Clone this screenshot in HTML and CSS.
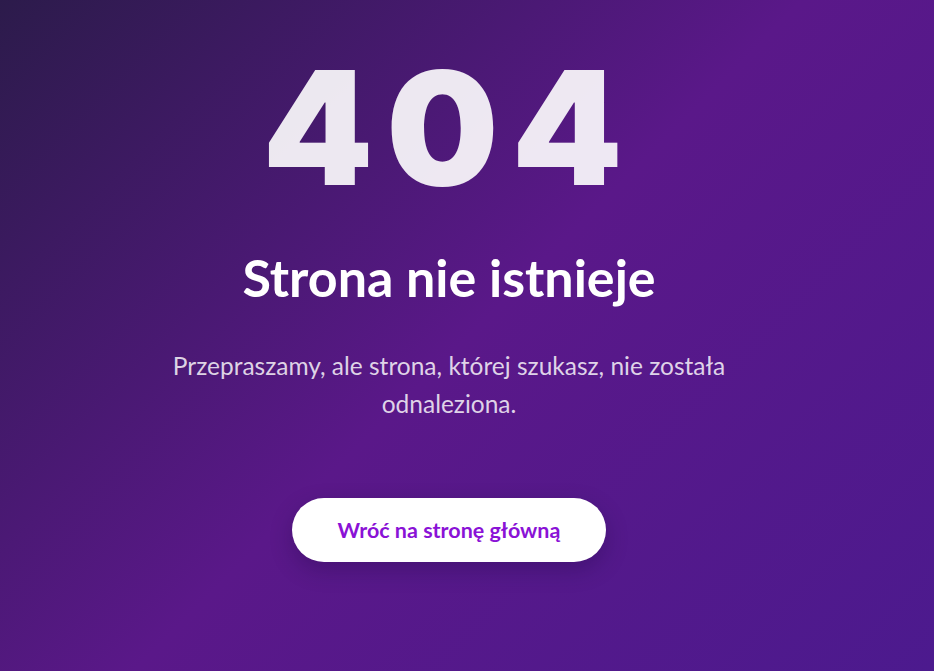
FILE: index.html
```html
<!DOCTYPE html>
<html lang="pl">
<head>
<meta charset="utf-8">
<title>404 - Strona nie istnieje</title>
<link rel="stylesheet" href="styles.css">
</head>
<body>
<main class="page">
  <div class="content">
    <h1 class="code">404</h1>
    <h2 class="title">Strona nie istnieje</h2>
    <p class="message">Przepraszamy, ale strona, której szukasz, nie została odnaleziona.</p>
    <a class="home-btn" href="#">Wróć na stronę główną</a>
  </div>
</main>
</body>
</html>
```
FILE: styles.css
```css
* { box-sizing: border-box; }
html, body { margin: 0; padding: 0; height: 100%; }
body {
  font-family: "Lato", "Open Sans", sans-serif;
  background: linear-gradient(135deg, #2c1b4b 0%, #5a1889 50%, #4c1a8e 100%);
  color: #fff;
}
.page {
  min-height: 100vh;
  display: flex;
  justify-content: center;
  align-items: flex-start;
  padding: 30px 36px 0 0;
}
.content {
  display: flex;
  flex-direction: column;
  align-items: center;
  text-align: center;
  width: 600px;
}
.code {
  margin: 11px 0 0;
  font-family: "Inter", sans-serif;
  font-weight: 900;
  font-size: 158px;
  line-height: 1.1;
  letter-spacing: 13px;
  color: rgba(255, 255, 255, 0.9);
}
.title {
  margin: 31px 0 0;
  font-size: 52px;
  font-weight: 700;
  line-height: 1.2;
}
.message {
  margin: 39px 0 0;
  font-size: 24.5px;
  line-height: 38px;
  color: rgba(255, 255, 255, 0.82);
}
.home-btn {
  margin-top: 75px;
  display: inline-flex;
  align-items: center;
  justify-content: center;
  width: 314px;
  height: 64px;
  border-radius: 32px;
  background: #fff;
  color: #8a12d6;
  font-size: 21.5px;
  font-weight: 700;
  text-decoration: none;
  box-shadow: 0 8px 22px rgba(20, 0, 50, 0.25);
}
```
